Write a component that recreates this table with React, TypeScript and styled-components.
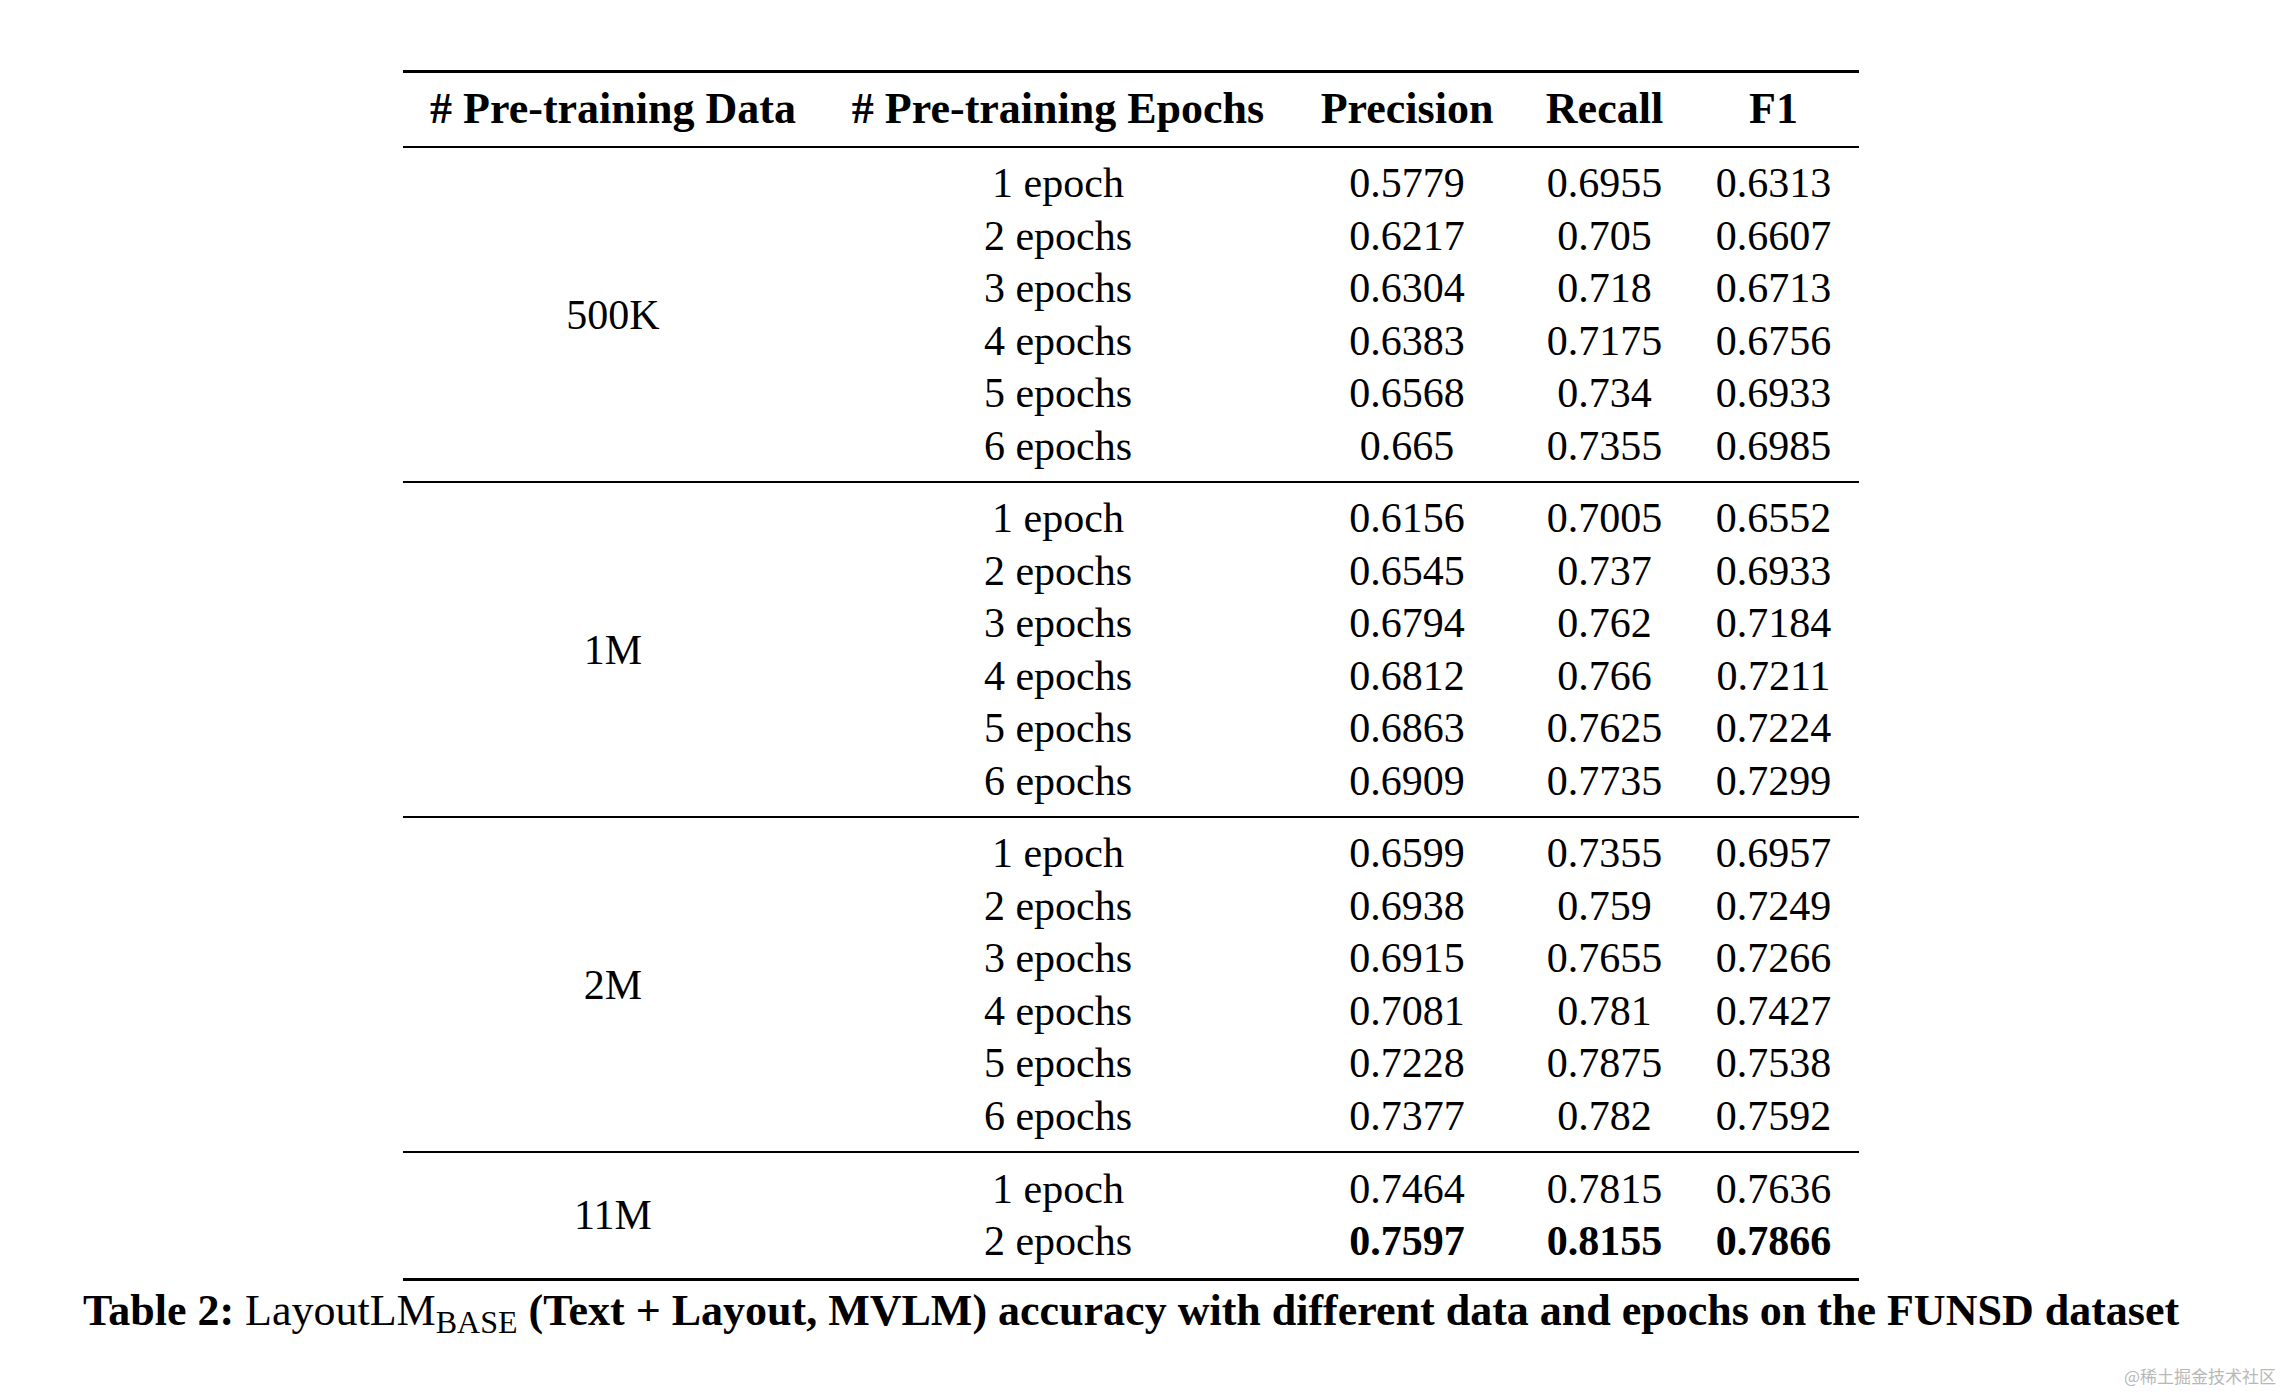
import React from "react";
import styled, { createGlobalStyle } from "styled-components";

const GlobalStyle = createGlobalStyle`
  html, body {
    margin: 0;
    padding: 0;
    background: #ffffff;
  }
  body {
    font-family: "Liberation Serif", "Times New Roman", serif;
    color: #000000;
  }
`;

const COLS = "420px 470px 228px 167px 171px";

const Page = styled.div`
  position: relative;
  width: 2284px;
  height: 1394px;
  overflow: hidden;
`;

const Figure = styled.div`
  width: 2262px;
  padding-top: 70px;
  display: flex;
  flex-direction: column;
  align-items: center;
`;

const Table = styled.div`
  width: 1456px;
  display: flex;
  flex-direction: column;
`;

const HeaderRow = styled.div`
  display: grid;
  grid-template-columns: ${COLS};
  align-items: center;
  height: 73px;
  border-top: 3px solid #000;
  border-bottom: 2px solid #000;
`;

const HeadCell = styled.div`
  text-align: center;
  font-weight: bold;
  font-size: 44px;
  line-height: 1;
  padding-bottom: 2px;
`;

const Section = styled.div<{ last?: boolean }>`
  display: grid;
  grid-template-columns: ${COLS};
  grid-auto-rows: 52.5px;
  padding: ${(p) => (p.last ? "9.5px 0 10px" : "9px 0")};
  border-bottom: ${(p) => (p.last ? "3px" : "2px")} solid #000;
`;

const DataCell = styled.div<{ span: number }>`
  grid-column: 1;
  grid-row: 1 / span ${(p) => p.span};
  display: flex;
  align-items: center;
  justify-content: center;
  font-size: 42px;
`;

const Cell = styled.div<{ bold?: boolean }>`
  display: flex;
  align-items: center;
  justify-content: center;
  font-size: 42px;
  font-weight: ${(p) => (p.bold ? "bold" : "normal")};
`;

const Caption = styled.div`
  margin-top: 5px;
  font-size: 44px;
  font-weight: bold;
  line-height: 50px;
  white-space: nowrap;
`;

const Plain = styled.span`
  font-weight: normal;
`;

const Sub = styled.sub`
  font-weight: normal;
  font-size: 32px;
  vertical-align: -8px;
  line-height: 0;
`;

const Watermark = styled.div`
  position: absolute;
  right: 8px;
  bottom: 6px;
  font-family: "Noto Sans CJK SC", sans-serif;
  font-size: 17px;
  color: #b8b8b8;
`;

type Row = { epochs: string; p: string; r: string; f: string; best?: boolean };
type Group = { data: string; rows: Row[] };

const ep = (n: number) => (n === 1 ? "1 epoch" : `${n} epochs`);

const groups: Group[] = [
  {
    data: "500K",
    rows: [
      ["0.5779", "0.6955", "0.6313"],
      ["0.6217", "0.705", "0.6607"],
      ["0.6304", "0.718", "0.6713"],
      ["0.6383", "0.7175", "0.6756"],
      ["0.6568", "0.734", "0.6933"],
      ["0.665", "0.7355", "0.6985"],
    ].map(([p, r, f], i) => ({ epochs: ep(i + 1), p, r, f })),
  },
  {
    data: "1M",
    rows: [
      ["0.6156", "0.7005", "0.6552"],
      ["0.6545", "0.737", "0.6933"],
      ["0.6794", "0.762", "0.7184"],
      ["0.6812", "0.766", "0.7211"],
      ["0.6863", "0.7625", "0.7224"],
      ["0.6909", "0.7735", "0.7299"],
    ].map(([p, r, f], i) => ({ epochs: ep(i + 1), p, r, f })),
  },
  {
    data: "2M",
    rows: [
      ["0.6599", "0.7355", "0.6957"],
      ["0.6938", "0.759", "0.7249"],
      ["0.6915", "0.7655", "0.7266"],
      ["0.7081", "0.781", "0.7427"],
      ["0.7228", "0.7875", "0.7538"],
      ["0.7377", "0.782", "0.7592"],
    ].map(([p, r, f], i) => ({ epochs: ep(i + 1), p, r, f })),
  },
  {
    data: "11M",
    rows: [
      { epochs: "1 epoch", p: "0.7464", r: "0.7815", f: "0.7636" },
      { epochs: "2 epochs", p: "0.7597", r: "0.8155", f: "0.7866", best: true },
    ],
  },
];

const App = () => {
  return (
    <Page>
      <GlobalStyle />
      <Figure>
        <Table>
          <HeaderRow>
            <HeadCell># Pre-training Data</HeadCell>
            <HeadCell># Pre-training Epochs</HeadCell>
            <HeadCell>Precision</HeadCell>
            <HeadCell>Recall</HeadCell>
            <HeadCell>F1</HeadCell>
          </HeaderRow>
          {groups.map((g, gi) => (
            <Section key={g.data} last={gi === groups.length - 1}>
              <DataCell span={g.rows.length}>{g.data}</DataCell>
              {g.rows.map((row) => (
                <React.Fragment key={row.epochs}>
                  <Cell>{row.epochs}</Cell>
                  <Cell bold={row.best}>{row.p}</Cell>
                  <Cell bold={row.best}>{row.r}</Cell>
                  <Cell bold={row.best}>{row.f}</Cell>
                </React.Fragment>
              ))}
            </Section>
          ))}
        </Table>
        <Caption>
          Table 2: <Plain>LayoutLM</Plain>
          <Sub>BASE</Sub> (Text + Layout, MVLM) accuracy with different data and
          epochs on the FUNSD dataset
        </Caption>
      </Figure>
      <Watermark>@稀土掘金技术社区</Watermark>
    </Page>
  );
};

export default App;
